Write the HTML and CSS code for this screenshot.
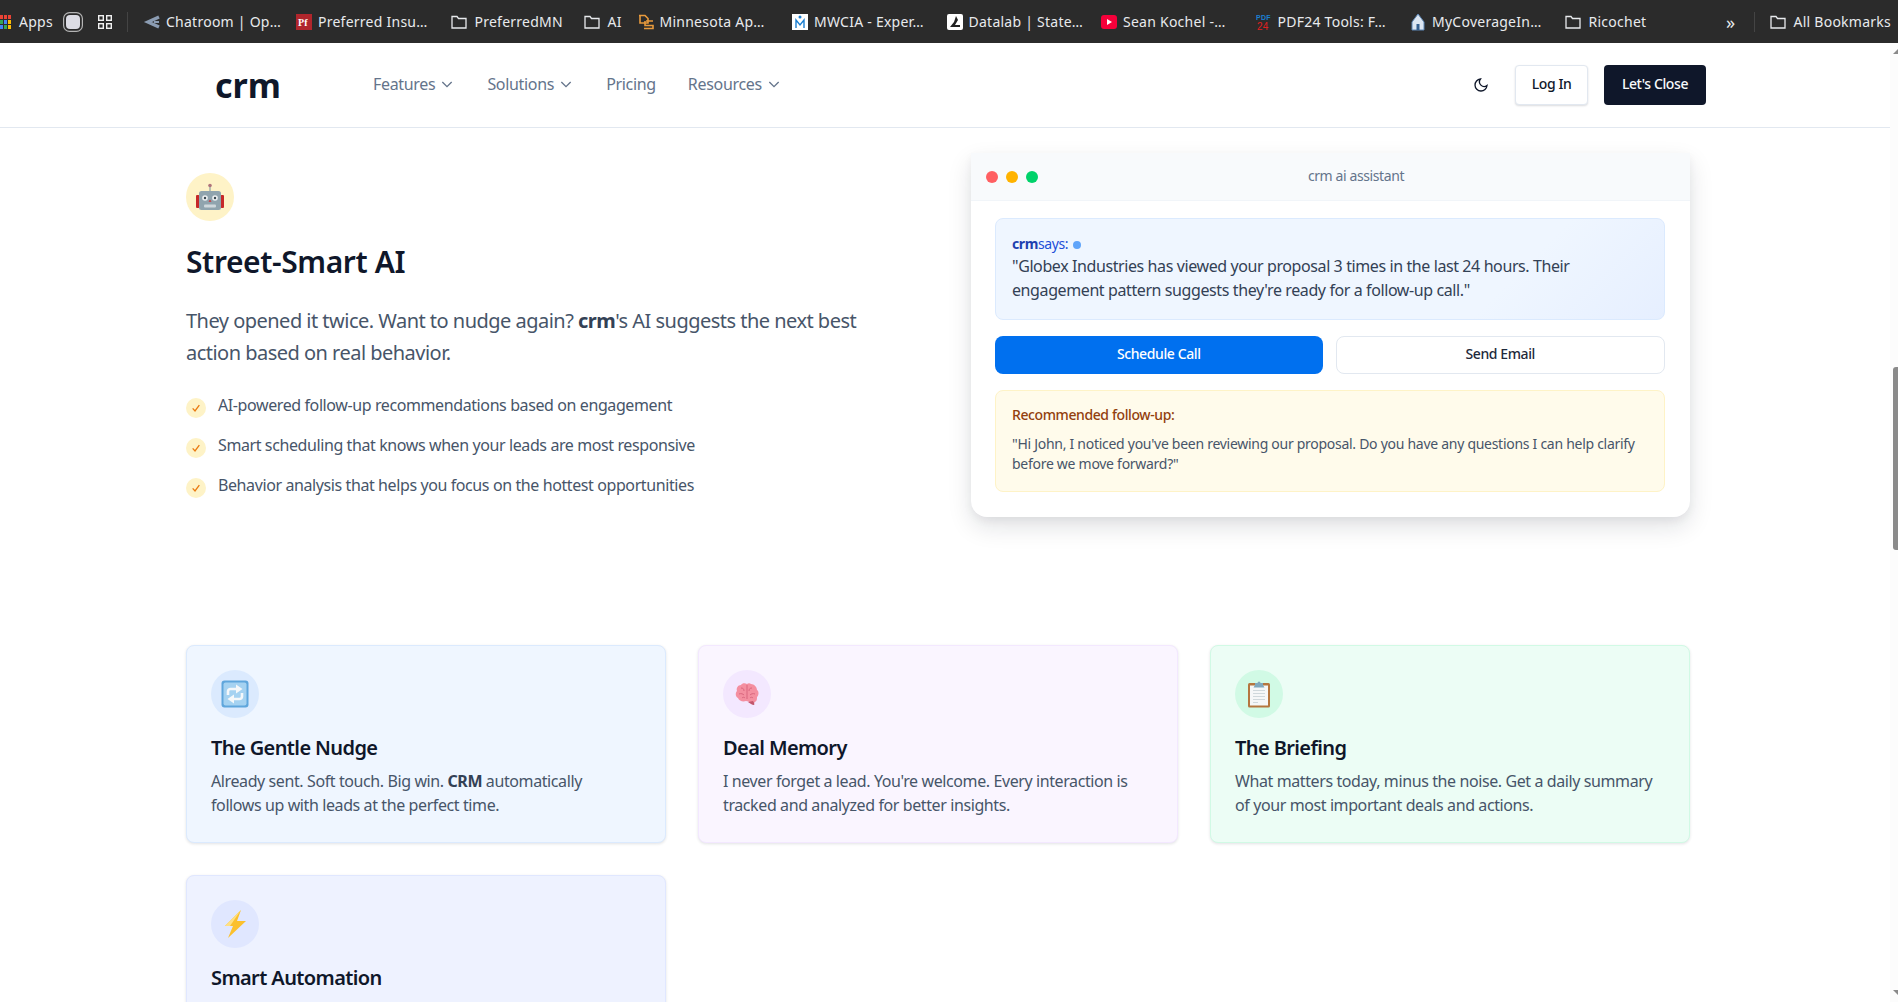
FILE: index.html
```html
<!DOCTYPE html>
<html lang="en">
<head>
  <meta charset="UTF-8">
  <meta name="viewport" content="width=device-width, initial-scale=1.0">
  <link rel="stylesheet" href="styles.css">
  <title>crm</title>
</head>
<body>

<div class="bookmarks">
  <div class="bm-apps"><svg width="11" height="14" viewBox="0 0 11 14"><rect x="0" y="0" width="3" height="4" fill="#ea4335"/><rect x="4" y="0" width="3" height="4" fill="#ea4335"/><rect x="8" y="0" width="3" height="4" fill="#ea4335"/><rect x="0" y="5" width="3" height="4" fill="#34a853"/><rect x="4" y="5" width="3" height="4" fill="#4285f4"/><rect x="8" y="5" width="3" height="4" fill="#fbbc04"/><rect x="0" y="10" width="3" height="4" fill="#4285f4"/><rect x="4" y="10" width="3" height="4" fill="#34a853"/><rect x="8" y="10" width="3" height="4" fill="#fbbc04"/></svg><span>Apps</span></div>
  <svg class="bm-ext" width="20" height="20" viewBox="0 0 20 20"><rect x="0.6" y="0.6" width="18.8" height="18.8" rx="6" fill="none" stroke="#b4b4b4" stroke-width="1.2"/><rect x="3" y="3" width="14" height="14" rx="4" fill="#dcdce4"/></svg>
  <svg class="bm-grid" width="14" height="14" viewBox="0 0 14 14" fill="none" stroke="#f0f0f0" stroke-width="1.4"><rect x="0.7" y="0.7" width="4.6" height="4.6"/><rect x="8.7" y="0.7" width="4.6" height="4.6"/><rect x="0.7" y="8.7" width="4.6" height="4.6"/><rect x="8.7" y="8.7" width="4.6" height="4.6"/></svg>
  <div class="bm-sep"></div>
  <div class="bm bm-first"><svg width="17" height="14" viewBox="0 0 17 14" fill="none" stroke="#8b9cb2" stroke-width="3.4"><path d="M16 2 5 7l11 5"/><path d="M11 7h5" stroke-width="2"/></svg><span>Chatroom | Op…</span></div>
  <div class="bm"><svg width="16" height="16" viewBox="0 0 16 16"><rect x="0" y="0" width="16" height="16" fill="#b0262c"/><text x="2" y="12" font-size="10" font-weight="700" font-family="Liberation Serif" fill="#fff">Pf</text></svg><span>Preferred Insu…</span></div>
  <div class="bm bm-mn"><svg class="folder" width="16" height="14" viewBox="0 0 16 14"><path d="M1 1.500h5l1.500 2H15v9.500H1z"/></svg><span>PreferredMN</span></div>
  <div class="bm bm-ai"><svg class="folder" width="16" height="14" viewBox="0 0 16 14"><path d="M1 1.500h5l1.500 2H15v9.500H1z"/></svg><span>AI</span></div>
  <div class="bm"><svg width="16" height="16" viewBox="0 0 16 16" fill="none" stroke="#e89a3c" stroke-width="1.600"><path d="M1 1.500h6l3 3V9H2V2m6 5h7M7 7v4.500h8v3H6"/></svg><span>Minnesota Ap…</span></div>
  <div class="bm"><svg width="16" height="16" viewBox="0 0 16 16"><rect width="16" height="16" fill="#fff"/><circle cx="8" cy="3" r="1.500" fill="#1b7fd1"/><path d="M4 14V6l4 5 4-5v8" fill="none" stroke="#1b7fd1" stroke-width="1.400"/></svg><span>MWCIA - Exper…</span></div>
  <div class="bm"><svg width="16" height="16" viewBox="0 0 16 16"><rect width="16" height="16" rx="2" fill="#fff"/><path d="M9 2 7 8l-4 5h10V11H8l3-5z" fill="#222"/></svg><span>Datalab | State…</span></div>
  <div class="bm"><svg width="16" height="16" viewBox="0 0 16 16"><rect y="1" width="16" height="14" rx="3" fill="#f5003a"/><path d="m6 5 5 3-5 3z" fill="#fff"/></svg><span>Sean Kochel -…</span></div>
  <div class="bm"><svg width="16" height="18" viewBox="0 0 16 18"><text x="0" y="7" font-size="7" font-weight="700" font-family="Liberation Sans" fill="#1b7fd1">PDF</text><text x="1" y="17" font-size="10" font-family="Liberation Sans" fill="#e02020">24</text></svg><span>PDF24 Tools: F…</span></div>
  <div class="bm"><svg width="16" height="18" viewBox="0 0 16 18"><path d="M8 1 2 9v8h12V9z" fill="#dce6f2" stroke="#5d86b5"/><rect x="6.500" y="11" width="3" height="6" fill="#35608f"/></svg><span>MyCoverageIn…</span></div>
  <div class="bm"><svg class="folder" width="16" height="14" viewBox="0 0 16 14"><path d="M1 1.500h5l1.500 2H15v9.500H1z"/></svg><span>Ricochet</span></div>
  <div class="bm-right">
    <span class="bm-more">»</span>
    <div class="bm-sep-right"></div>
    <div class="bm-all"><svg class="folder" width="16" height="14" viewBox="0 0 16 14"><path d="M1 1.500h5l1.500 2H15v9.500H1z"/></svg><span>All Bookmarks</span></div>
  </div>
</div>

<div class="viewport">
  <div class="page">
    <header class="nav">
      <div class="nav-inner">
        <div class="logo">crm</div>
        <nav class="nav-links">
          <a>Features <svg class="chev" viewBox="0 0 12 12"><path d="m2.500 4.500 3.500 3.500 3.500-3.500"/></svg></a>
          <a>Solutions <svg class="chev" viewBox="0 0 12 12"><path d="m2.500 4.500 3.500 3.500 3.500-3.500"/></svg></a>
          <a>Pricing</a>
          <a>Resources <svg class="chev" viewBox="0 0 12 12"><path d="m2.500 4.500 3.500 3.500 3.500-3.500"/></svg></a>
        </nav>
        <div class="nav-actions">
          <svg class="moon" width="16" height="16" viewBox="0 0 24 24"><path d="M21 12.800A9 9 0 1 1 11.200 3 7 7 0 0 0 21 12.800z"/></svg>
          <button class="btn-login">Log In</button>
          <button class="btn-close">Let's Close</button>
        </div>
      </div>
    </header>

    <main class="container">
      <section class="hero">
        <div class="hero-text">
          <div class="icon-circle amber">
            <svg width="28" height="28" viewBox="0 0 28 28"><rect x="13.500" y="3" width="1" height="5" fill="#78909c"/><circle cx="14" cy="2.500" r="1.800" fill="#b0747c"/><rect x="0" y="12" width="3.500" height="13" rx="1" fill="#c62828"/><rect x="24.500" y="12" width="3.500" height="13" rx="1" fill="#c62828"/><rect x="3" y="8" width="22" height="19" rx="2.500" fill="#90a4ae"/><circle cx="9" cy="15" r="2.800" fill="#eceff1"/><circle cx="19" cy="15" r="2.800" fill="#eceff1"/><circle cx="9" cy="15" r="1.200" fill="#37474f"/><circle cx="19" cy="15" r="1.200" fill="#37474f"/><path d="M14 16.500l1.500 2.200h-3z" fill="#d32f2f"/><rect x="8" y="21.500" width="12" height="3" rx="1" fill="#cfd8dc"/></svg>
          </div>
          <h2 class="hero-title">Street-Smart AI</h2>
          <p class="hero-lead">They opened it twice. Want to nudge again? <strong>crm</strong>'s AI suggests the next best action based on real behavior.</p>
          <ul class="checks">
            <li><span class="tick"><svg width="10" height="10" viewBox="0 0 12 12"><path d="m2 6.500 2.800 3L10 2.500"/></svg></span>AI-powered follow-up recommendations based on engagement</li>
            <li><span class="tick"><svg width="10" height="10" viewBox="0 0 12 12"><path d="m2 6.500 2.800 3L10 2.500"/></svg></span>Smart scheduling that knows when your leads are most responsive</li>
            <li><span class="tick"><svg width="10" height="10" viewBox="0 0 12 12"><path d="m2 6.500 2.800 3L10 2.500"/></svg></span>Behavior analysis that helps you focus on the hottest opportunities</li>
          </ul>
        </div>

        <div class="assistant">
          <div class="assistant-bar">
            <span class="dot red"></span><span class="dot yellow"></span><span class="dot green"></span>
            <span class="assistant-title">crm ai assistant</span>
          </div>
          <div class="assistant-body">
            <div class="says">
              <div class="says-who"><b>crm</b>says: <span class="pulse"></span></div>
              <p>"Globex Industries has viewed your proposal 3 times in the last 24 hours. Their engagement pattern suggests they're ready for a follow-up call."</p>
            </div>
            <div class="assistant-btns">
              <button class="btn-primary">Schedule Call</button>
              <button class="btn-outline">Send Email</button>
            </div>
            <div class="followup">
              <div class="followup-head">Recommended follow-up:</div>
              <p>"Hi John, I noticed you've been reviewing our proposal. Do you have any questions I can help clarify before we move forward?"</p>
            </div>
          </div>
        </div>
      </section>

      <section class="cards">
        <div class="card card-blue">
          <div class="icon-circle">
            <svg width="28" height="28" viewBox="0 0 28 28"><rect x="0.500" y="0.500" width="27" height="27" rx="3" fill="#5fa6dc"/><rect x="2.500" y="2.500" width="23" height="23" rx="2" fill="#a5d2f1"/><path d="M7 15v-3.500a2.500 2.500 0 0 1 2.500-2.500H16M21 13v3.500a2.500 2.500 0 0 1-2.500 2.500H12" fill="none" stroke="#f5f8fa" stroke-width="2.600"/><path d="M15 4.500 21.500 9 15 13.500zM13 14.500 6.500 19l6.500 4.500z" fill="#f5f8fa"/></svg>
          </div>
          <h3>The Gentle Nudge</h3>
          <p>Already sent. Soft touch. Big win. <strong>CRM</strong> automatically follows up with leads at the perfect time.</p>
        </div>
        <div class="card card-purple">
          <div class="icon-circle">
            <svg width="28" height="28" viewBox="0 0 28 28"><path d="M14 4c-2-1.500-5-1-6 1-3 0-5 3-4 6-2 2-1.500 6 1 7 1 3 5 4 8 3 3 1 5 1 7 3l2-2c2-1 2-3 2-5 2-2 2-6 0-7 0-3-3-6-6-6-1-1-3-1-4 0z" fill="#f48fa0"/><path d="M20 21c1 2 2 3 1 4-2 0-4-2-6-3z" fill="#c2566c"/><path d="M14 5v14M8 8c2 0 3 1 3 3M6 14c2-1 4 0 5 1M19 8c-2 0-3 1-3 3M22 14c-2-1-4 0-5 1M9 18c1-1 2-1 3 0M17 18c1-1 2-1 3 0" fill="none" stroke="#d9667e" stroke-width="1"/></svg>
          </div>
          <h3>Deal Memory</h3>
          <p>I never forget a lead. You're welcome. Every interaction is tracked and analyzed for better insights.</p>
        </div>
        <div class="card card-green">
          <div class="icon-circle">
            <svg width="28" height="28" viewBox="0 0 28 28"><rect x="3" y="3" width="22" height="24.500" rx="1.500" fill="#b5763f"/><rect x="5" y="5.500" width="18" height="20" fill="#f5f7f8"/><path d="M8 10.500h12M8 13.500h12M8 16.500h12M8 19.500h12M8 22.500h5" stroke="#cfd8dc" stroke-width="1.200"/><path d="M10 5V3h2.500a1.500 1.500 0 0 1 3 0H18v2l1.500 2.500h-11z" fill="#7fa8bd"/></svg>
          </div>
          <h3>The Briefing</h3>
          <p>What matters today, minus the noise. Get a daily summary of your most important deals and actions.</p>
        </div>
        <div class="card card-indigo">
          <div class="icon-circle">
            <svg width="28" height="28" viewBox="0 0 28 28"><path d="M20 0 4 16h8L7 28 25 11h-9z" fill="#fbc02d"/><path d="M20 0 4 16h5z" fill="#ffe082"/></svg>
          </div>
          <h3>Smart Automation</h3>
        </div>
      </section>
    </main>
  </div>

  <div class="scrollbar">
    <span class="arrow-up"></span>
    <div class="scroll-track"><div class="scroll-thumb"></div></div>
    <span class="arrow-down"></span>
  </div>
</div>

</body>
</html>
```

FILE: styles.css
```css
* {
  box-sizing: border-box;
}

body {
  margin: 0;
  height: 1002px;
  overflow: hidden;
  display: flex;
  flex-direction: column;
  font-family: 'Noto Sans', sans-serif;
  background-color: #fff;
  color: #0f172a;
}

/* bookmarks bar */
.bookmarks {
  height: 43px;
  flex: none;
  display: flex;
  align-items: center;
  background-color: #2b2b2b;
  color: #e8eaed;
  font-size: 14px;
  letter-spacing: 0.25px;
  white-space: nowrap;
  overflow: hidden;
}

.bm-apps {
  width: 63px;
  flex: none;
  display: flex;
  align-items: center;
  gap: 8px;
}

.bm-ext {
  flex: none;
  margin-right: 15px;
}

.bm-grid {
  flex: none;
}

.bm-sep {
  width: 1px;
  height: 20px;
  flex: none;
  background-color: #444;
  margin: 0 15px;
}

.bm {
  width: 154.5px;
  display: flex;
  align-items: center;
  gap: 6px;
  flex: none;
}

.bm-first {
  width: 153px;
}

.bm-mn {
  width: 133px;
}

.bm-ai {
  width: 54px;
}

.folder {
  fill: none;
  stroke: #e8eaed;
  stroke-width: 1.300;
  margin-right: 2px;
}

.bm-right {
  margin-left: auto;
  display: flex;
  align-items: center;
  padding-right: 7px;
}

.bm-more {
  font-size: 18px;
  margin-right: 18px;
}

.bm-sep-right {
  width: 1px;
  height: 20px;
  background-color: #444;
  margin-right: 15px;
}

.bm-all {
  display: flex;
  align-items: center;
  gap: 6px;
}

/* page area */
.viewport {
  flex: 1;
  min-height: 0;
  display: flex;
  overflow: hidden;
}

.page {
  flex: 1;
  min-width: 0;
  letter-spacing: -0.025em;
}

.scrollbar {
  width: 8px;
  flex: none;
  display: flex;
  flex-direction: column;
  align-items: flex-end;
  background-color: #fcfcfc;
}

.scroll-track {
  flex: 1;
  width: 100%;
  padding-top: 313px;
}

.scroll-thumb {
  height: 183px;
  margin-left: 3px;
  width: 5px;
  background-color: #8a8a8a;
  border-radius: 3px 0 0 3px;
}

.arrow-up, .arrow-down {
  width: 0;
  height: 0;
  border-left: 5px solid transparent;
}

.arrow-up {
  margin-top: 6px;
  border-bottom: 5px solid #8a8a8a;
}

.arrow-down {
  margin-bottom: 7px;
  border-top: 5px solid #8a8a8a;
}

/* nav */
.nav {
  height: 85px;
  border-bottom: 1px solid #e2e8f0;
}

.nav-inner {
  width: 1529px;
  margin-left: 177px;
  height: 100%;
  display: flex;
  align-items: center;
  padding-left: 38px;
}

.logo {
  font-size: 34px;
  font-weight: 700;
  letter-spacing: 0;
  width: 158px;
  line-height: 1;
  color: #0f172a;
}

.nav-links {
  display: flex;
  align-items: center;
  gap: 32px;
  font-size: 16px;
  letter-spacing: -0.02em;
  color: #64748b;
  padding-bottom: 2px;
}

.nav-links a {
  display: flex;
  align-items: center;
  gap: 4px;
}

.chev {
  width: 16px;
  height: 16px;
  fill: none;
  stroke: #64748b;
  stroke-width: 1;
}

.nav-actions {
  margin-left: auto;
  display: flex;
  align-items: center;
  gap: 16px;
}

.moon {
  fill: none;
  stroke: #0f172a;
  stroke-width: 2;
  margin-right: 10px;
}

.nav-actions button {
  height: 40px;
  padding: 0 0 3px;
  font-family: inherit;
  font-size: 14px;
  font-weight: 500;
  letter-spacing: inherit;
  border-radius: 4px;
}

.btn-login {
  width: 73px;
  background-color: #fff;
  color: #0f172a;
  border: 1px solid #e2e8f0;
  box-shadow: 0 1px 2px rgba(15, 23, 42, 0.15);
}

.btn-close {
  width: 102px;
  background-color: #0f172a;
  color: #f8fafc;
  border: none;
}

/* hero */
.container {
  width: 1504px;
  margin-left: 186px;
}

.hero {
  display: flex;
  justify-content: space-between;
  height: 517px;
  padding-top: 25px;
}

.hero-text {
  width: 690px;
  padding-top: 20px;
}

.icon-circle {
  width: 48px;
  height: 48px;
  border-radius: 50%;
  display: flex;
  align-items: center;
  justify-content: center;
}

.icon-circle.amber {
  background-color: #fef3c7;
}

.hero-title {
  margin: 23px 0 0;
  font-size: 30px;
  line-height: 36px;
  font-weight: 600;
  color: #0f172a;
}

.hero-lead {
  margin: 25px 0 0;
  font-size: 20px;
  line-height: 32px;
  letter-spacing: -0.026em;
  color: #475569;
}

.hero-lead strong {
  color: #334155;
}

.checks {
  list-style: none;
  margin: 16px 0 0;
  padding: 0;
}

.checks li {
  display: flex;
  align-items: center;
  gap: 12px;
  height: 40px;
  font-size: 16px;
  color: #475569;
}

.tick {
  width: 20px;
  height: 20px;
  flex: none;
  margin-top: 6px;
  border-radius: 50%;
  background-color: #fef3c7;
  display: flex;
  align-items: center;
  justify-content: center;
}

.tick path {
  fill: none;
  stroke: #ea7a10;
  stroke-width: 1.600;
}

/* assistant window */
.assistant {
  width: 719px;
  height: 364px;
  border-radius: 0 0 16px 16px;
  background-color: #fff;
  box-shadow: 0 10px 25px rgba(15, 23, 42, 0.12), 0 4px 8px rgba(15, 23, 42, 0.05);
}

.assistant-bar {
  height: 48px;
  display: flex;
  align-items: center;
  gap: 8px;
  padding-left: 15px;
  background-color: #f8fafc;
  border-bottom: 1px solid #f1f5f9;
}

.dot {
  width: 12px;
  height: 12px;
  border-radius: 50%;
}

.dot.red {
  background-color: #ff5f62;
}

.dot.yellow {
  background-color: #ffb300;
}

.dot.green {
  background-color: #00d26a;
}

.assistant-title {
  flex: 1;
  text-align: center;
  font-size: 14px;
  color: #64748b;
  padding-right: 24px;
  padding-bottom: 2px;
}

.assistant-body {
  padding: 17px 25px 0 24px;
}

.says {
  height: 102px;
  padding: 14px 16px;
  border: 1px solid #dbeafe;
  border-radius: 8px;
  background: linear-gradient(135deg, #eff6ff 75%, #e6efff);
}

.says-who {
  font-size: 14px;
  line-height: 21px;
  color: #1d4ed8;
}

.says-who b {
  color: #1e40af;
}

.pulse {
  display: inline-block;
  width: 8px;
  height: 8px;
  margin-left: 2px;
  border-radius: 50%;
  background-color: #60a5fa;
}

.says p {
  margin: 0;
  font-size: 16px;
  line-height: 24px;
  color: #334155;
}

.assistant-btns {
  display: flex;
  gap: 13px;
  margin-top: 16px;
}

.assistant-btns button {
  flex: 1;
  height: 38px;
  padding: 0 0 3px;
  font-family: inherit;
  font-size: 14px;
  font-weight: 500;
  letter-spacing: inherit;
  border-radius: 8px;
}

.btn-primary {
  border: none;
  background-color: #0070ef;
  color: #fff;
}

.btn-outline {
  border: 1px solid #e2e8f0;
  background-color: #fff;
  color: #1e293b;
}

.followup {
  height: 102px;
  margin-top: 16px;
  padding: 14px 16px;
  border: 1px solid #fef3c7;
  border-radius: 8px;
  background-color: #fffbeb;
}

.followup-head {
  font-size: 14px;
  line-height: 20px;
  font-weight: 500;
  color: #92400e;
}

.followup p {
  margin: 9px 0 0;
  font-size: 14px;
  line-height: 20px;
  letter-spacing: -0.02em;
  color: #475569;
}

/* feature cards */
.cards {
  display: grid;
  grid-template-columns: repeat(3, 480px);
  gap: 32px;
}

.card {
  height: 198px;
  padding: 24px;
  border: 1px solid;
  border-radius: 8px;
  box-shadow: 0 1px 3px rgba(15, 23, 42, 0.12);
}

.card h3 {
  margin: 16px 0 0;
  font-size: 20px;
  line-height: 28px;
  font-weight: 600;
  letter-spacing: -0.03em;
  color: #0f172a;
}

.card p {
  max-width: 422px;
  margin: 7px 0 0;
  font-size: 16px;
  line-height: 24px;
  color: #475569;
}

.card p strong {
  color: #334155;
}

.card-blue {
  background-color: #eff6ff;
  border-color: #dbeafe;
}

.card-blue .icon-circle {
  background-color: #dbeafe;
}

.card-purple {
  background-color: #faf5ff;
  border-color: #f3e8ff;
}

.card-purple .icon-circle {
  background-color: #f3e8ff;
}

.card-green {
  background-color: #ecfdf5;
  border-color: #d1fae5;
}

.card-green .icon-circle {
  background-color: #d1fae5;
}

.card-indigo {
  background-color: #eef2ff;
  border-color: #e0e7ff;
}

.card-indigo .icon-circle {
  background-color: #e0e7ff;
}
```
